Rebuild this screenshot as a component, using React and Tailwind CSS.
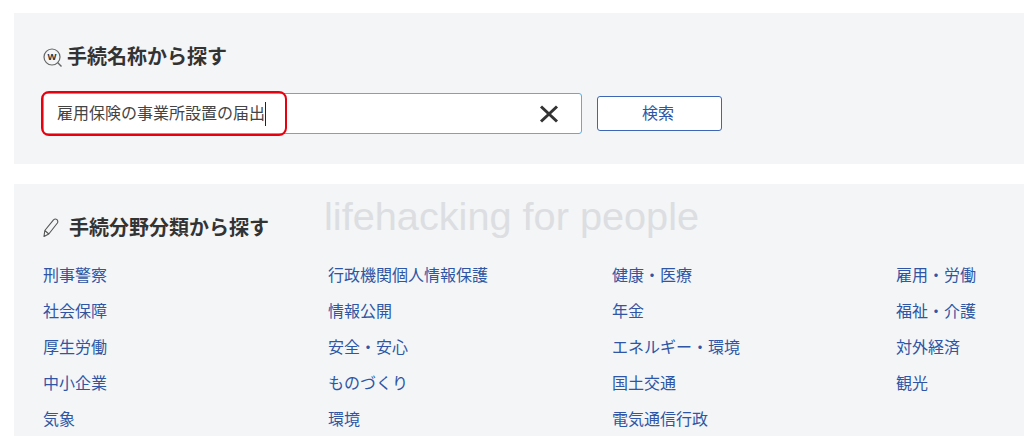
const font = { fontFamily: '"Noto Sans CJK JP", sans-serif' };

const categories = [
  ["刑事警察", "行政機関個人情報保護", "健康・医療", "雇用・労働"],
  ["社会保障", "情報公開", "年金", "福祉・介護"],
  ["厚生労働", "安全・安心", "エネルギー・環境", "対外経済"],
  ["中小企業", "ものづくり", "国土交通", "観光"],
  ["気象", "環境", "電気通信行政", ""],
];

function SearchIcon() {
  return (
    <svg width="20" height="20" viewBox="0 0 20 20" fill="none" className="shrink-0 mt-[3px]">
      <circle cx="9" cy="9" r="8" stroke="#666" strokeWidth="1.2" />
      <path d="M14.8 14.8 L18.5 18.5" stroke="#666" strokeWidth="1.4" />
      <text x="9" y="12.3" textAnchor="middle" fontSize="9.5" fontWeight="700" fill="#333" fontFamily="Liberation Sans">W</text>
    </svg>
  );
}

function PencilIcon() {
  return (
    <svg width="16" height="20" viewBox="0 0 16 20" fill="none" className="shrink-0 mt-[2px]">
      <path d="M1 18.5 L1.8 12.5 L10.5 1.8 Q12.2 0.4 14 1.6 Q15.4 3.4 14.4 5 L5.8 16 Z M1.8 12.5 L5.8 16" stroke="#555" strokeWidth="1.1" strokeLinejoin="round" />
    </svg>
  );
}

export default function App() {
  return (
    <div className="relative h-[439px] w-[1024px] overflow-hidden bg-white pl-[14px] pt-[13px]" style={font}>
      <section className="h-[151px] bg-[#f3f5f7] pl-[29px] pt-[29px]">
        <h2 className="flex h-[28px] items-center gap-[4px] text-[20px] font-bold leading-[28px] text-[#333]">
          <SearchIcon />
          手続名称から探す
        </h2>
        <div className="mt-[23px] flex items-center gap-[15px]">
          <div className="flex h-[41px] w-[539px] items-center justify-between rounded-[3px] border border-[#4fb0ea] bg-white pl-[13px] pr-[22px]">
            <span className="flex items-center text-[16px] text-[#444]">
              <span className="pb-[3px]">雇用保険の事業所設置の届出</span>
              <span className="h-[24px] w-px bg-[#222]" />
            </span>
            <svg width="22" height="22" viewBox="0 0 22 22" fill="none" className="mr-[-1px]">
              <path d="M3 3.5 L19 18.5 M19 3.5 L3 18.5" stroke="#333" strokeWidth="3" />
            </svg>
          </div>
          <button className="h-[35px] w-[125px] rounded-[3px] border border-[#3d66b5] bg-white pb-[3px] pr-[3px] text-[16px] text-[#2f55a4]">
            検索
          </button>
        </div>
      </section>

      <section className="mt-[20px] h-[252px] bg-[#f3f5f7] pl-[29px] pt-[29px]">
        <h2 className="flex h-[28px] items-center gap-[10px] text-[20px] font-bold leading-[28px] text-[#333]">
          <PencilIcon />
          手続分野分類から探す
        </h2>
        <div className="mt-[15px] grid grid-cols-[285px_284px_284px_1fr] auto-rows-[36px]">
          {categories.flat().map((name, i) => (
            <a key={i} className="text-[16px] leading-[36px] text-[#2f55a4]">
              {name}
            </a>
          ))}
        </div>
      </section>

      <div
        className="absolute left-[324px] top-[191px] text-[39.7px] leading-[50px] text-[#dcdee1]"
        style={{ fontFamily: '"Liberation Sans", sans-serif' }}
      >
        lifehacking for people
      </div>
      <div className="absolute left-[41px] top-[91px] h-[45px] w-[246px] rounded-[8px] border-2 border-[#e8000f]" />
    </div>
  );
}
